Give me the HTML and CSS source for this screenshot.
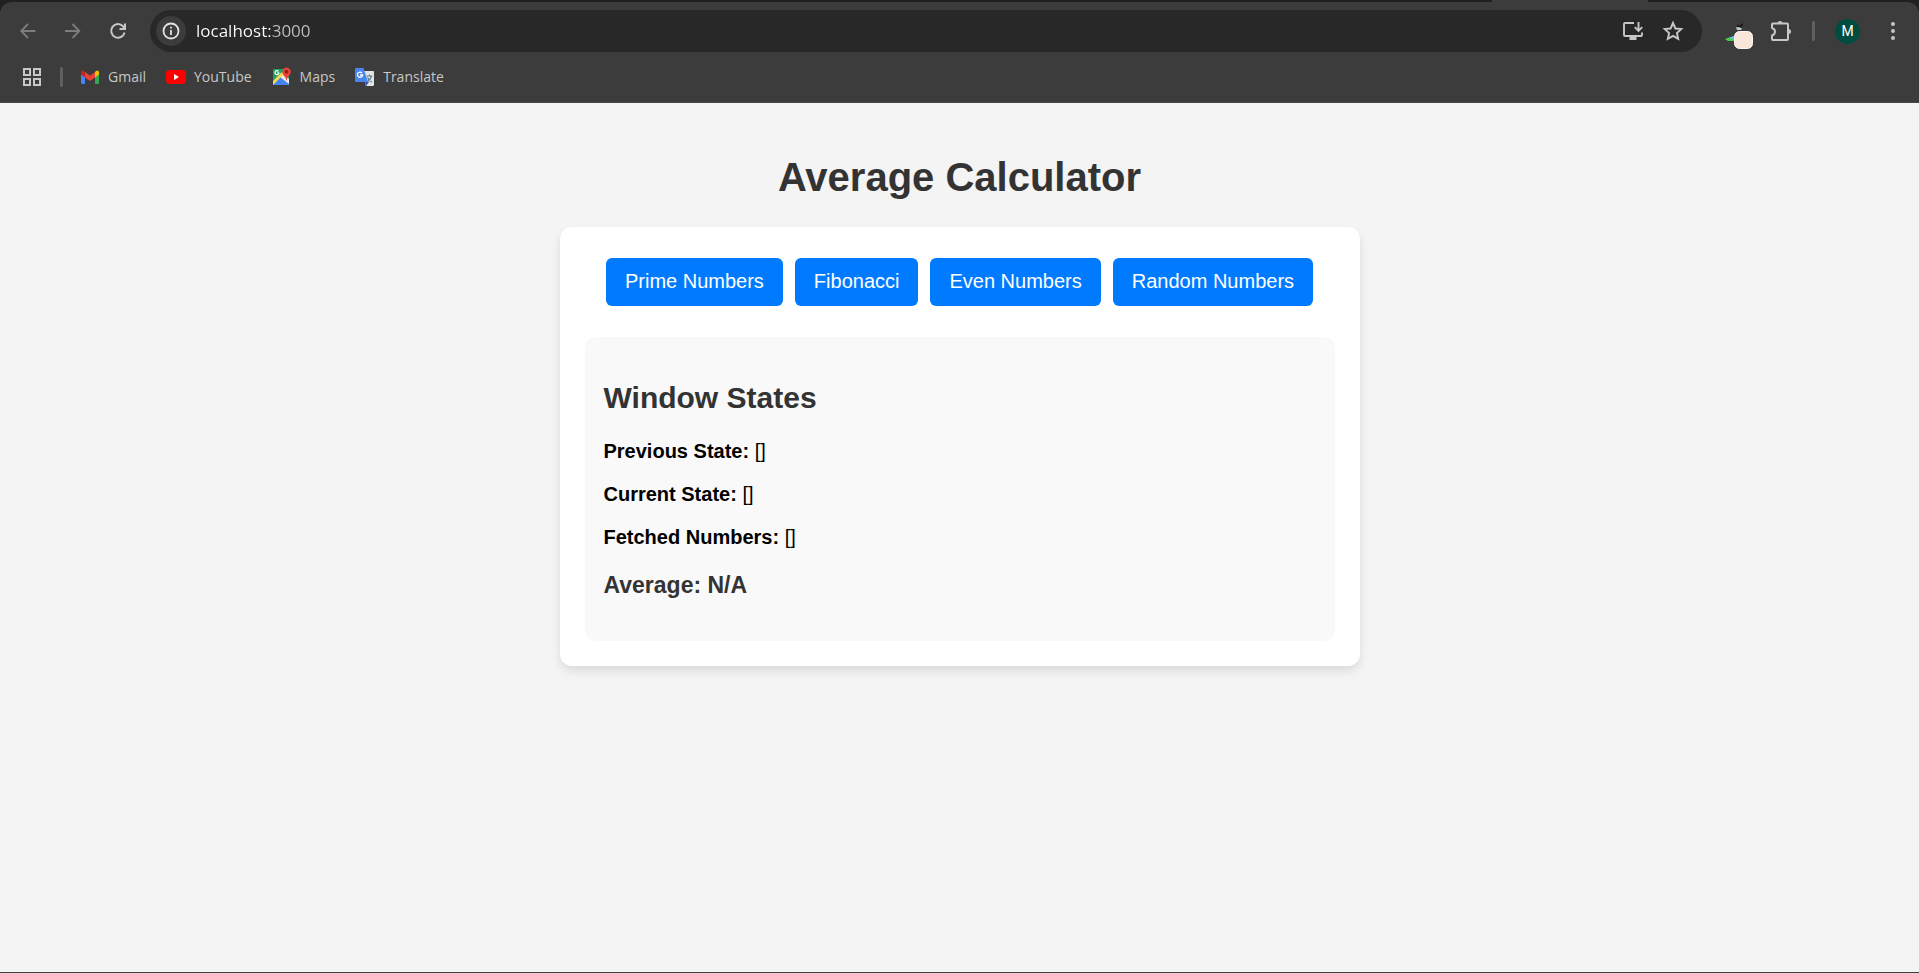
FILE: index.html
```html
<!DOCTYPE html>
<html lang="en">
<head>
<meta charset="utf-8">
<meta name="viewport" content="width=device-width, initial-scale=1">
<title>Average Calculator</title>
<link rel="stylesheet" href="styles.css">
</head>
<body>
<header class="browser">
  <div class="tab-foot"></div>
  <div class="chrome">
    <div class="toolbar">
      <button class="tool faded" type="button" aria-label="Back">
        <svg width="20" height="20" viewBox="0 0 20 20" fill="none" stroke="currentColor" stroke-width="1.8"><path d="M17.500 10H3.500M10 3L3.200 10L10 17"/></svg>
      </button>
      <button class="tool faded" type="button" aria-label="Forward">
        <svg width="20" height="20" viewBox="0 0 20 20" fill="none" stroke="currentColor" stroke-width="1.8"><path d="M2 10H16M9.500 3L16.300 10L9.500 17"/></svg>
      </button>
      <button class="tool" type="button" aria-label="Reload">
        <svg width="20" height="20" viewBox="0 0 20 20" fill="none" stroke="currentColor" stroke-width="2"><path d="M16.600 11.500A6.800 6.800 0 1 1 15 5.300L17 7.500"/><path d="M17 2.500V8H11.500"/></svg>
      </button>
      <div class="address">
        <button class="site-info" type="button" aria-label="View site information">
          <svg width="18" height="18" viewBox="0 0 18 18" fill="none" stroke="currentColor" stroke-width="1.8"><circle cx="9" cy="9" r="7.500"/><path d="M9 8V13M9 4.800V6.600"/></svg>
        </button>
        <input class="url" type="text" value="localhost:3000" aria-label="Address" spellcheck="false">
        <button class="address-action" type="button" aria-label="Install app">
          <svg width="22" height="22" viewBox="0 0 22 22" fill="none" stroke="currentColor" stroke-width="1.900"><path d="M12 3H3Q2 3 2 4V15Q2 16 3 16H19Q20 16 20 15V12.500"/><path d="M7.500 18H14.500" stroke-width="4"/><path d="M16.500 2V10.500M12.800 7.200L16.500 11L20.200 7.200"/></svg>
        </button>
        <button class="address-action" type="button" aria-label="Bookmark this tab">
          <svg width="22" height="22" viewBox="0 0 22 22" fill="none" stroke="currentColor" stroke-width="1.900"><path d="M11 3L13.400 8.500L19.300 9.100L14.900 13.100L16.200 18.900L11 15.900L5.800 18.900L7.100 13.100L2.700 9.100L8.600 8.500Z"/></svg>
        </button>
      </div>
      <div class="extensions">
        <button class="tool" type="button" aria-label="Extension">
          <svg width="28" height="36" viewBox="0 0 28 36"><path d="M0 26L4 24.500L9 25V28H3Z" fill="#4fc94a"/><path d="M4 24.500L9 23V27L7 26Z" fill="#56c7e8"/><path d="M12 11L14 13L19 10L16 14.500L13 16Z" fill="#111"/><path d="M11 14.500L14 14L17 15.500L16 17H12Z" fill="#b9c9cc"/><rect x="9.500" y="18.500" width="18" height="17" rx="5" fill="#f9e6da" stroke="#fff5ee"/></svg>
        </button>
        <button class="tool" type="button" aria-label="Extensions">
          <svg width="24" height="24" viewBox="0 0 24 24" fill="none" stroke="currentColor" stroke-width="2" stroke-linejoin="round"><path d="M4 4.500H18Q19 4.500 19 5.500V20Q19 21 18 21H4Q3 21 3 20V16.500Q6 15.500 6 12.800Q6 10 3 9V5.500Q3 4.500 4 4.500Z"/><path d="M8.500 4.500A2.500 2.500 0 0 1 13.500 4.500ZM19.500 10A2.500 2.500 0 0 1 19.500 15Z" fill="currentColor" stroke="none"/></svg>
        </button>
        <span class="divider"></span>
        <button class="avatar" type="button" aria-label="Profile M">M</button>
        <button class="tool" type="button" aria-label="Menu">
          <svg width="20" height="20" viewBox="0 0 20 20" fill="currentColor"><circle cx="10" cy="3" r="2"/><circle cx="10" cy="10" r="2"/><circle cx="10" cy="17" r="2"/></svg>
        </button>
      </div>
    </div>
    <nav class="bookmarks" aria-label="Bookmarks">
      <button class="apps" type="button" aria-label="Apps">
        <svg width="20" height="20" viewBox="0 0 20 20" fill="none" stroke="currentColor" stroke-width="2"><path d="M2 2H8V8H2ZM12 2H18V8H12ZM2 12H8V18H2ZM12 12H18V18H12Z"/></svg>
      </button>
      <span class="divider"></span>
      <a class="bookmark" href="#gmail">
        <svg width="20" height="20" viewBox="0 0 20 20"><path d="M1 6L5 8V17H2.500Q1 17 1 15.500Z" fill="#4285f4"/><path d="M15 8L19 6V15.500Q19 17 17.500 17H15Z" fill="#34a853"/><path d="M15 5L16 4Q17.500 3 18.500 4Q19 4.500 19 5.500V7.500L15 10.500Z" fill="#fbbc04"/><path d="M5 5L10 8.800L15 5V10.500L10 14L5 10.500Z" fill="#ea4335"/><path d="M1 5.500Q1 3.500 2.700 3.500Q3.500 3.500 5 5V10.500L1 7.500Z" fill="#c5221f"/></svg>
        <span>Gmail</span>
      </a>
      <a class="bookmark" href="#youtube">
        <svg width="20" height="20" viewBox="0 0 20 20"><rect x="0" y="3" width="20" height="14" rx="4" fill="#f00"/><path d="M8 7L13 10L8 13Z" fill="#fff"/></svg>
        <span>YouTube</span>
      </a>
      <a class="bookmark" href="#maps">
        <svg width="20" height="20" viewBox="0 0 20 20"><rect x="1" y="2" width="16" height="16" rx="1" fill="#1ea362"/><path d="M1 17L9 9L17 17V18H1Z" fill="#4285f4"/><path d="M8 10L12 7L17 12V17Z" fill="#e8eaed"/><path d="M1 14L10 5L12 7L1 18Z" fill="#ffd84c"/><path d="M6.500 4.300A2 2 0 1 0 7 6H5" fill="none" stroke="#fff" stroke-width="1.200"/><path d="M14.500 14Q14 10.500 11.500 8Q9.600 5.500 10.600 3Q11.800 .5 14.500 .5Q17.200 .5 18.500 3Q19.400 5.500 17.500 8Q15 10.500 14.500 14Z" fill="#ea4335"/><circle cx="14.500" cy="4.800" r="1.800" fill="#8c1d18"/></svg>
        <span>Maps</span>
      </a>
      <a class="bookmark" href="#translate">
        <svg width="20" height="20" viewBox="0 0 20 20"><path d="M7 4H18Q19 4 19 5V18Q19 19 18 19H11Z" fill="#e4e4e4"/><path d="M11.500 9H17.500M14.500 7.500V9M16.500 9Q15.500 13 12 15M12.500 10.500Q14 13.500 17 15" fill="none" stroke="#607d8b" stroke-width="1.200"/><path d="M10 15H14L11 19Z" fill="#3b50b5"/><path d="M1 1Q0 1 0 2V14Q0 15 1 15H13L8.500 1Z" fill="#4a86f0"/><path d="M7 6A2.600 2.600 0 1 0 7.600 8H5" fill="none" stroke="#fff" stroke-width="1.300"/></svg>
        <span>Translate</span>
      </a>
    </nav>
  </div>
</header>
<main class="page">
  <h1>Average Calculator</h1>
  <section class="card">
    <div class="choices">
      <button class="choice" type="button">Prime Numbers</button>
      <button class="choice" type="button">Fibonacci</button>
      <button class="choice" type="button">Even Numbers</button>
      <button class="choice" type="button">Random Numbers</button>
    </div>
    <div class="result">
      <h2>Window States</h2>
      <p><strong>Previous State:</strong> []</p>
      <p><strong>Current State:</strong> []</p>
      <p><strong>Fetched Numbers:</strong> []</p>
      <h3>Average: N/A</h3>
    </div>
  </section>
</main>
</body>
</html>
```
FILE: styles.css
```css
* { box-sizing: border-box; }

body {
  margin: 0;
  min-height: 100vh;
  display: flex;
  flex-direction: column;
  background: #f4f4f4;
  border-bottom: 1px solid #404040;
  font-family: "Liberation Sans", Arial, sans-serif;
}

button {
  border: 0;
  padding: 0;
  background: none;
  color: inherit;
  font: inherit;
  cursor: pointer;
}

svg { display: block; flex: none; }

/* Browser frame */
.browser {
  background: #1f2020;
  color: #c7c7c7;
  font-family: "Open Sans", "Noto Sans", sans-serif;
}

.tab-foot {
  height: 2px;
  width: 156px;
  margin-left: auto;
  margin-right: 271px;
  background: #3c3c3c;
}

.chrome {
  background: #3c3c3c;
  border-radius: 12px 12px 0 0;
  border-bottom: 1px solid #474747;
}

.toolbar {
  display: flex;
  align-items: center;
  gap: 10px;
  padding: 8px 9px 4px 10px;
}

.tool {
  width: 35px;
  height: 35px;
  display: flex;
  align-items: center;
  justify-content: center;
}

.faded { color: #7d7d7d; }

.address {
  flex: 1;
  height: 42px;
  margin-left: 5px;
  padding: 0 9px 0 6px;
  display: flex;
  align-items: center;
  border-radius: 21px;
  background: #282828;
}

.site-info {
  width: 30px;
  height: 30px;
  display: flex;
  align-items: center;
  justify-content: center;
  border-radius: 50%;
  background: #3c3c3c;
  color: #e3e3e3;
}

.url {
  flex: 1;
  min-width: 0;
  margin-left: 10px;
  padding: 0;
  border: 0;
  outline: 0;
  font: 17px/24px "Open Sans", "Noto Sans", sans-serif;
  color: transparent;
  background: linear-gradient(90deg, #fff 74px, #c0c0c0 74px);
  -webkit-background-clip: text;
  background-clip: text;
}

.address-action {
  width: 40px;
  height: 32px;
  display: flex;
  align-items: center;
  justify-content: center;
}

.extensions {
  display: flex;
  align-items: center;
  gap: 7px;
  margin-left: 9px;
}

.divider {
  width: 3px;
  height: 20px;
  border-radius: 2px;
  background: #5f5f5f;
}

.extensions .divider { margin: 0 13px 0 7px; }

.avatar {
  width: 25px;
  height: 25px;
  margin-right: 8px;
  border-radius: 50%;
  background: #004d40;
  color: #fff;
  font: 14px/25px Roboto, sans-serif;
}

.bookmarks {
  display: flex;
  align-items: center;
  gap: 20px;
  height: 46px;
  padding: 0 22px 4px;
}

.bookmarks .divider { margin: 0 -3px 0 -2px; }

.bookmark {
  display: flex;
  align-items: center;
  gap: 8px;
  color: inherit;
  font-size: 14px;
  line-height: 20px;
  text-decoration: none;
}

/* Calculator */
.page {
  flex: 1;
  padding: 51px 25px 25px;
}

h1, h2, h3 { color: #333; }

h1 {
  margin: 0 0 27px;
  font-size: 40px;
  line-height: 46px;
  text-align: center;
}

.card {
  max-width: 800px;
  margin: 0 auto;
  padding: 25px;
  border-radius: 12px;
  background: #fff;
  box-shadow: 0 5px 10px rgba(0, 0, 0, 0.1);
}

.choices {
  display: flex;
  flex-wrap: wrap;
  justify-content: center;
  gap: 12px;
  padding: 6px 0;
  margin-bottom: 25px;
}

.choice {
  padding: 12px 19px 13px;
  border-radius: 6px;
  background: #007bff;
  color: #fff;
  font-size: 20px;
  line-height: 23px;
}

.result {
  padding: 44px 19px 42px;
  border-radius: 10px;
  background: #f9f9f9;
  font-size: 20px;
  line-height: 23px;
}

h2 {
  margin: 0 0 25px;
  font-size: 30px;
  line-height: 34px;
}

p { margin: 0 0 20px; }

h3 {
  margin: 23px 0 0;
  font-size: 23px;
  line-height: 27px;
}
```
